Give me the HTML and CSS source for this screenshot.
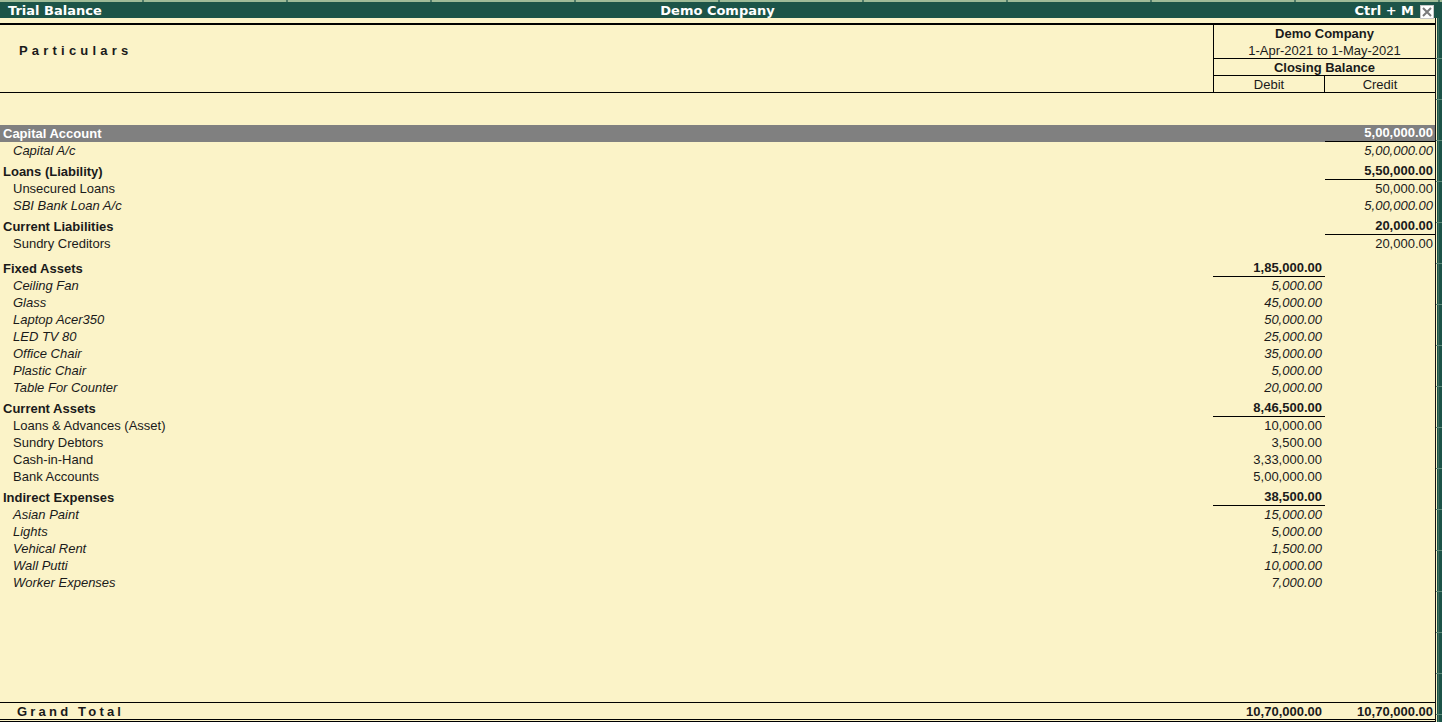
FILE: index.html
```html
<!DOCTYPE html>
<html lang="en">
<head>
<meta charset="utf-8">
<title>Trial Balance</title>
<link rel="stylesheet" href="styles.css">
</head>
<body>
<div class="titlebar">
  <div class="tabstrip"></div>
  <div class="titlerow">
    <span class="t-left">Trial Balance</span>
    <span class="t-center">Demo Company</span>
    <span class="t-right">Ctrl + M
      <svg class="close" width="14" height="14" viewBox="0 0 14 14"><rect x="0.5" y="0.5" width="13" height="13" fill="#ffffff" stroke="#c8c8c8"/><path d="M3 3 L11 11 M11 3 L3 11" stroke="#7a7a7a" stroke-width="2"/></svg>
    </span>
  </div>
</div>
<div class="frame">
  <div class="main">
    <div class="header">
      <div class="h-part">Particulars</div>
      <div class="h-box">
        <div class="hb-name">Demo Company</div>
        <div class="hb-date">1-Apr-2021 to 1-May-2021</div>
        <div class="hb-close">Closing Balance</div>
        <div class="hb-cols"><span class="hb-dr">Debit</span><span class="hb-cr">Credit</span></div>
      </div>
    </div>
    <div class="list">
      <div class="row grp sel first"><span class="name">Capital Account</span><span class="amt"></span><span class="amt ul">5,00,000.00</span></div>
      <div class="row led"><span class="name">Capital A/c</span><span class="amt"></span><span class="amt">5,00,000.00</span></div>
      <div class="row grp"><span class="name">Loans (Liability)</span><span class="amt"></span><span class="amt ul">5,50,000.00</span></div>
      <div class="row sub"><span class="name">Unsecured Loans</span><span class="amt"></span><span class="amt">50,000.00</span></div>
      <div class="row led"><span class="name">SBI Bank Loan A/c</span><span class="amt"></span><span class="amt">5,00,000.00</span></div>
      <div class="row grp"><span class="name">Current Liabilities</span><span class="amt"></span><span class="amt ul">20,000.00</span></div>
      <div class="row sub"><span class="name">Sundry Creditors</span><span class="amt"></span><span class="amt">20,000.00</span></div>
      <div class="row grp wide"><span class="name">Fixed Assets</span><span class="amt ul">1,85,000.00</span><span class="amt"></span></div>
      <div class="row led"><span class="name">Ceiling Fan</span><span class="amt">5,000.00</span><span class="amt"></span></div>
      <div class="row led"><span class="name">Glass</span><span class="amt">45,000.00</span><span class="amt"></span></div>
      <div class="row led"><span class="name">Laptop Acer350</span><span class="amt">50,000.00</span><span class="amt"></span></div>
      <div class="row led"><span class="name">LED TV 80</span><span class="amt">25,000.00</span><span class="amt"></span></div>
      <div class="row led"><span class="name">Office Chair</span><span class="amt">35,000.00</span><span class="amt"></span></div>
      <div class="row led"><span class="name">Plastic Chair</span><span class="amt">5,000.00</span><span class="amt"></span></div>
      <div class="row led"><span class="name">Table For Counter</span><span class="amt">20,000.00</span><span class="amt"></span></div>
      <div class="row grp"><span class="name">Current Assets</span><span class="amt ul">8,46,500.00</span><span class="amt"></span></div>
      <div class="row sub"><span class="name">Loans &amp; Advances (Asset)</span><span class="amt">10,000.00</span><span class="amt"></span></div>
      <div class="row sub"><span class="name">Sundry Debtors</span><span class="amt">3,500.00</span><span class="amt"></span></div>
      <div class="row sub"><span class="name">Cash-in-Hand</span><span class="amt">3,33,000.00</span><span class="amt"></span></div>
      <div class="row sub"><span class="name">Bank Accounts</span><span class="amt">5,00,000.00</span><span class="amt"></span></div>
      <div class="row grp"><span class="name">Indirect Expenses</span><span class="amt ul">38,500.00</span><span class="amt"></span></div>
      <div class="row led"><span class="name">Asian Paint</span><span class="amt">15,000.00</span><span class="amt"></span></div>
      <div class="row led"><span class="name">Lights</span><span class="amt">5,000.00</span><span class="amt"></span></div>
      <div class="row led"><span class="name">Vehical Rent</span><span class="amt">1,500.00</span><span class="amt"></span></div>
      <div class="row led"><span class="name">Wall Putti</span><span class="amt">10,000.00</span><span class="amt"></span></div>
      <div class="row led"><span class="name">Worker Expenses</span><span class="amt">7,000.00</span><span class="amt"></span></div>
    </div>
    <div class="total">
      <span class="t-label">Grand Total</span>
      <span class="amt">10,70,000.00</span>
      <span class="amt">10,70,000.00</span>
    </div>
  </div>
  <div class="rail"></div>
</div>
</body>
</html>
```

FILE: styles.css
```css
* { box-sizing: border-box; }
html, body { margin: 0; padding: 0; }
body {
  width: 1442px;
  height: 722px;
  overflow: hidden;
  background: #fbf3c8;
  font-family: "Liberation Sans", Arial, sans-serif;
  font-size: 13px;
  color: #1a1a1a;
}
.titlebar { height: 18px; background: #1c5448; }
.tabstrip {
  height: 2px;
  background: repeating-linear-gradient(to right, #9fbb98 0 142px, #4f7a68 142px 144px);
}
.titlerow {
  height: 16px;
  display: grid;
  grid-template-columns: 1fr auto 1fr;
  align-items: center;
  color: #ffffff;
  font-family: "DejaVu Sans", Verdana, sans-serif;
  font-weight: bold;
  font-size: 13px;
  line-height: 17px;
}
.t-left { padding-left: 8px; }
.t-center { text-align: center; padding-right: 7px; }
.t-right {
  display: flex;
  justify-content: flex-end;
  align-items: center;
  gap: 6px;
  padding-right: 8px;
}
.close { display: block; margin-top: 3px; }
.frame { display: flex; height: 704px; }
.main {
  width: 1435px;
  display: flex;
  flex-direction: column;
  padding-top: 5px;
}
.rail {
  width: 7px;
  border-left: 1px solid #111;
  background:
    repeating-linear-gradient(to bottom, transparent 0 40px, #5d8a78 40px 41px),
    linear-gradient(to right, #fbf3c8 0 1px, #1c5448 1px 2px, #3f6e5e 2px 3px, #1c5448 3px);
}
.header {
  border-top: 2px solid #000;
  border-bottom: 1px solid #000;
  display: grid;
  grid-template-columns: 1fr 222px;
  height: 70px;
}
.h-part {
  padding: 18px 0 0 19px;
  font-weight: bold;
  letter-spacing: 4.2px;
  line-height: 16px;
}
.h-box {
  border-left: 1px solid #000;
  text-align: center;
  line-height: 16px;
}
.hb-name { height: 17px; padding-top: 1px; font-weight: bold; }
.hb-date { height: 17px; padding-top: 1px; border-bottom: 1px solid #000; }
.hb-close { height: 17px; padding-top: 1px; border-bottom: 1px solid #000; font-weight: bold; }
.hb-cols { display: grid; grid-template-columns: 111px 1fr; height: 16px; line-height: 17px; }
.hb-dr { border-right: 1px solid #000; }
.list { padding-top: 32px; }
.row {
  display: grid;
  grid-template-columns: 1fr 112px 110px;
  height: 17px;
  line-height: 17px;
  white-space: nowrap;
}
.row .name { padding-left: 13px; }
.row .amt { text-align: right; padding-right: 2px; }
.row .amt:nth-child(2) { padding-right: 3px; }
.grp { margin-top: 4px; font-weight: bold; }
.grp.first { margin-top: 0; }
.grp.wide { margin-top: 8px; }
.grp .name { padding-left: 3px; }
.led { font-style: italic; }
.ul { border-bottom: 1px solid #000; line-height: 16px; }
.sel { background: #808080; color: #ffffff; }
.total {
  margin-top: auto;
  display: grid;
  grid-template-columns: 1fr 112px 110px;
  border-top: 1px solid #000;
  border-bottom: 3px double #000;
  height: 20px;
  line-height: 16px;
  padding-top: 1px;
  font-weight: bold;
}
.t-label { padding-left: 17px; letter-spacing: 3.2px; }
.total .amt { text-align: right; padding-right: 2px; }
.total .amt:nth-child(2) { padding-right: 3px; }
```
